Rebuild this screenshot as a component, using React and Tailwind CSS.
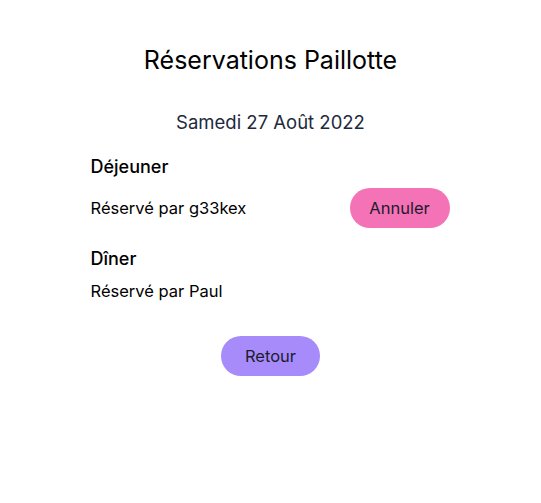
export default function App() {
  return (
    <div className="min-h-screen bg-white font-['Inter',sans-serif] text-black">
      <div className="mx-auto flex w-[360px] flex-col pt-[44px]">
        {/* Title */}
        <h1 className="text-center text-[25px] leading-[32px]">Réservations Paillotte</h1>
        <h2 className="mt-[32px] text-center text-[18.5px] leading-[28px] text-[#1e293b]">Samedi 27 Août 2022</h2>

        {/* Meals */}
        <div className="mt-[17px] flex flex-col">
          <h3 className="text-[18px] font-medium leading-[28px]">Déjeuner</h3>
          <div className="mt-[7px] flex items-center justify-between">
            <span className="text-[16.5px]">Réservé par g33kex</span>
            <button className="mr-[1px] h-[40px] w-[100px] rounded-full bg-[#f472b6] text-[16.5px] text-[#1e1b2e]">
              Annuler
            </button>
          </div>
          <h3 className="mt-[17px] text-[18px] font-medium leading-[28px]">Dîner</h3>
          <div className="mt-[6px] flex items-center">
            <span className="text-[16.5px] leading-[24px]">Réservé par Paul</span>
          </div>
        </div>

        <div className="mt-[33px] flex justify-center">
          <button className="h-[40px] w-[99px] rounded-full bg-[#a78bfa] text-[16.5px] text-[#1e1b2e]">
            Retour
          </button>
        </div>
      </div>
    </div>
  );
}
